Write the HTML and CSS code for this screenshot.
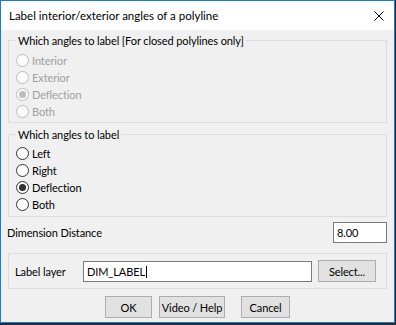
FILE: index.html
```html
<!DOCTYPE html>
<html>
<head>
<meta charset="utf-8">
<link rel="stylesheet" href="styles.css">
</head>
<body>
<div class="window">
  <div class="titlebar">
    <span class="title">Label interior/exterior angles of a polyline</span>
    <svg class="close" width="10" height="10" viewBox="0 0 10 10"><path d="M0.5 0.5 L9.5 9.5 M9.5 0.5 L0.5 9.5" stroke="#000" stroke-width="1" fill="none"/></svg>
  </div>
  <div class="content">
    <fieldset class="group g1 disabled">
      <legend>Which angles to label [For closed polylines only]</legend>
      <div class="row"><span class="radio"></span>Interior</div>
      <div class="row"><span class="radio"></span>Exterior</div>
      <div class="row"><span class="radio checked"></span>Deflection</div>
      <div class="row"><span class="radio"></span>Both</div>
    </fieldset>
    <fieldset class="group g2">
      <legend>Which angles to label</legend>
      <div class="row"><span class="radio"></span>Left</div>
      <div class="row"><span class="radio"></span>Right</div>
      <div class="row"><span class="radio checked"></span>Deflection</div>
      <div class="row"><span class="radio"></span>Both</div>
    </fieldset>
    <div class="dimrow">
      <span class="dimlabel">Dimension Distance</span>
      <div class="input num">8.00</div>
    </div>
    <div class="layerbox">
      <span class="layerlabel">Label layer</span>
      <div class="input layer">DIM_LABEL<span class="caret"></span></div>
      <div class="btn select">Select...</div>
    </div>
    <div class="buttons">
      <div class="btn ok">OK</div>
      <div class="btn help">Video / Help</div>
      <div class="btn cancel">Cancel</div>
    </div>
  </div>
</div>
</body>
</html>
```
FILE: styles.css
```css
html, body {
  margin: 0;
  padding: 0;
}
body {
  width: 396px;
  height: 325px;
  background: #2b2b2b;
  font-family: Lato, "Open Sans", sans-serif;
  font-size: 11px;
  letter-spacing: -0.1px;
  color: #000;
}
.window {
  box-sizing: border-box;
  width: 395px;
  height: 323px;
  border: 1px solid #1a7bd6;
  background: #f0f0f0;
  display: flex;
  flex-direction: column;
}
.titlebar {
  height: 29px;
  background: #fff;
  display: flex;
  align-items: center;
  padding-left: 8px;
  flex-shrink: 0;
}
.title {
  font-size: 11.5px;
  letter-spacing: 0;
  line-height: 16px;
}
.close {
  margin-left: auto;
  margin-right: 10px;
}
.content {
  padding: 0 7px;
  display: flex;
  flex-direction: column;
  white-space: nowrap;
}
.group {
  margin: 0;
  padding: 0 0 0 7px;
  border: 1px solid #dcdcdc;
  min-width: 0;
}
.group legend {
  padding: 0 2px;
  margin-left: 0;
  line-height: 15px;
}
.g1 {
  margin-top: 3px;
  padding-top: 4px;
  padding-bottom: 2px;
}
.g2 {
  margin-top: 4px;
  padding-top: 3px;
  padding-bottom: 3px;
}
.row {
  height: 17px;
  display: flex;
  align-items: center;
}
.radio {
  box-sizing: border-box;
  width: 13px;
  height: 13px;
  border: 1px solid #333;
  border-radius: 50%;
  background: #fff;
  margin-right: 3px;
  display: flex;
  align-items: center;
  justify-content: center;
}
.radio.checked::after {
  content: "";
  width: 7px;
  height: 7px;
  border-radius: 50%;
  background: #333;
}
.disabled .row {
  color: #a0a0a0;
}
.disabled .radio {
  border-color: #bcbcbc;
  background: #fcfcfc;
}
.disabled .radio.checked::after {
  background: #bcbcbc;
}
.dimrow {
  margin-top: 5px;
  height: 21px;
  display: flex;
  align-items: center;
}
.dimlabel {
  margin-left: -1px;
}
.input {
  box-sizing: border-box;
  height: 21px;
  background: #fff;
  border: 1px solid #7a7a7a;
  display: flex;
  align-items: center;
  padding-left: 3px;
}
.num {
  margin-left: auto;
  width: 54px;
}
.layerbox {
  box-sizing: border-box;
  margin-top: 10px;
  height: 36px;
  border: 1px solid #dcdcdc;
  padding: 7px 0 6px 6px;
  display: flex;
  align-items: flex-start;
}
.layerlabel {
  width: 68px;
  line-height: 21px;
}
.layer {
  width: 229px;
}
.caret {
  display: inline-block;
  width: 1px;
  height: 12px;
  background: #000;
  margin-left: 1px;
}
.btn {
  box-sizing: border-box;
  height: 22px;
  background: #e1e1e1;
  border: 1px solid #adadad;
  display: flex;
  align-items: center;
  justify-content: center;
}
.select {
  width: 58px;
  margin-left: 6px;
  margin-top: -1px;
}
.buttons {
  margin-top: 7px;
  padding-left: 97px;
  display: flex;
}
.ok { width: 47px; }
.help { width: 66px; margin-left: 7px; }
.cancel { width: 49px; margin-left: 16px; }
```
